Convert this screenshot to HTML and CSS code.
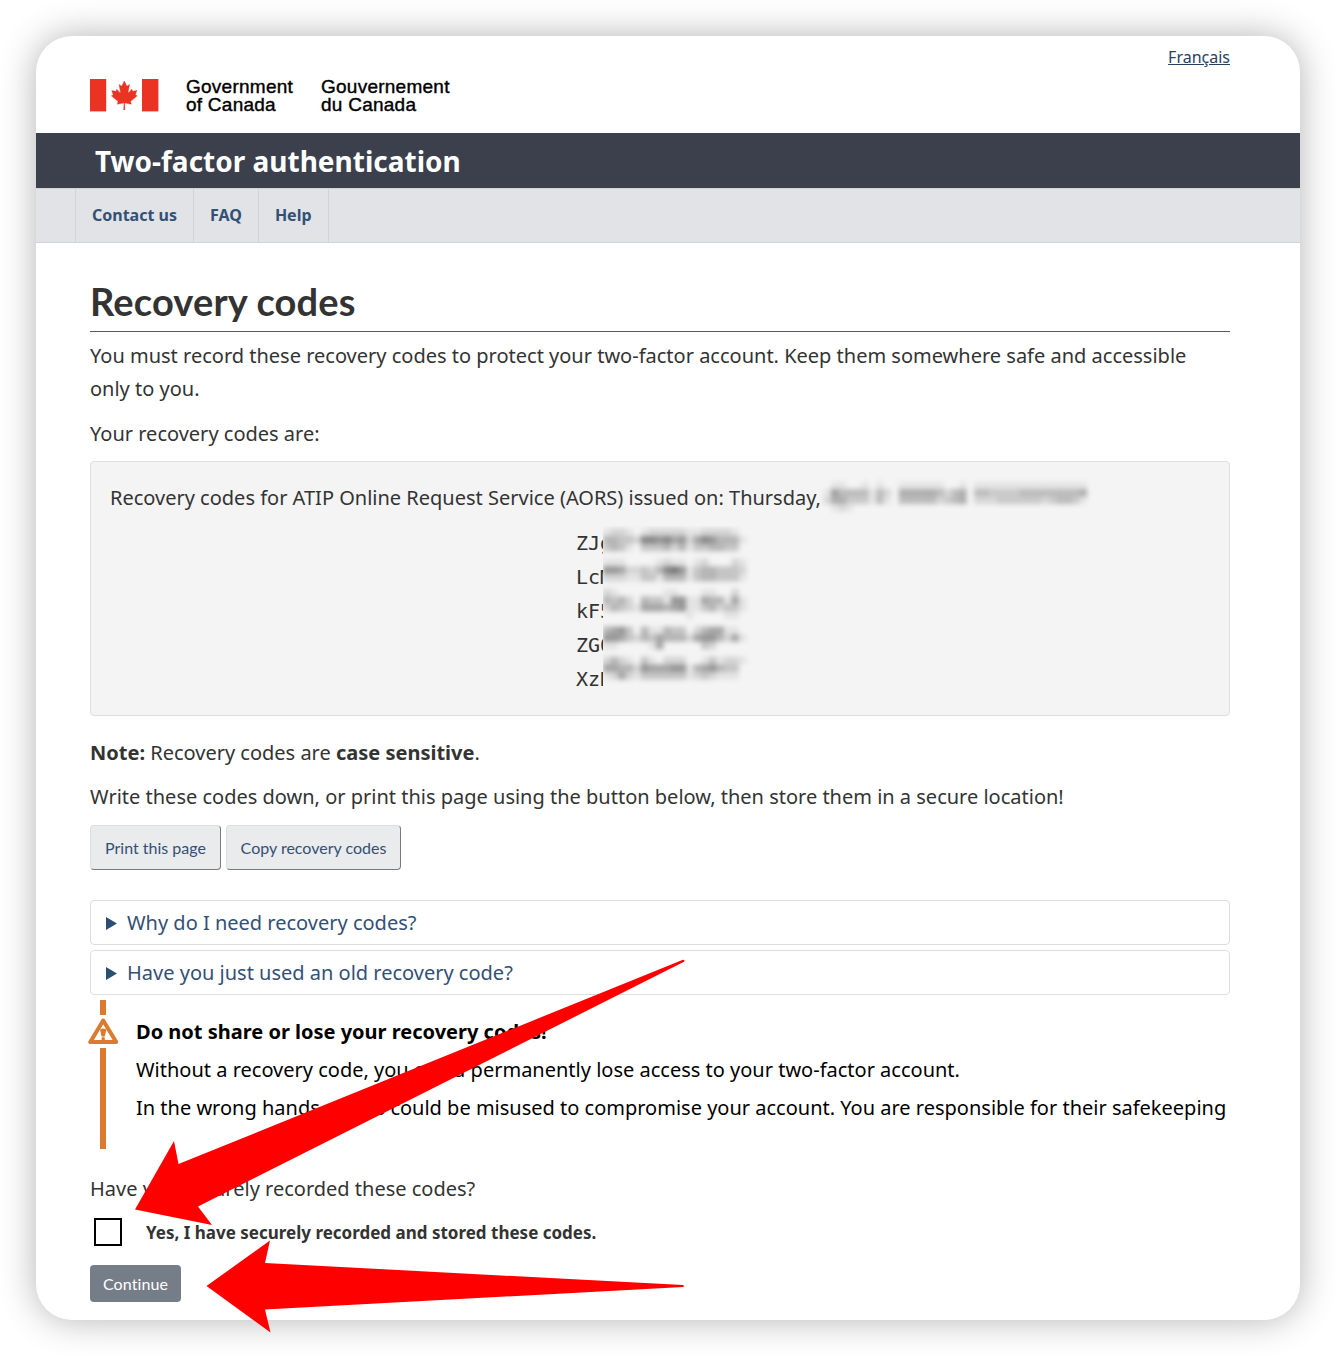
FILE: index.html
```html
<!DOCTYPE html>
<html lang="en">
<head>
<meta charset="utf-8">
<title>Recovery codes</title>
<link rel="stylesheet" href="styles.css">
</head>
<body>
<div class="window">
  <header class="brand">
    <svg class="flag" viewBox="0 0 69 33" width="69" height="33">
      <rect width="16.2" height="32.4" fill="#eb3323"/>
      <rect x="52" width="16.4" height="32.4" fill="#eb3323"/>
      <svg x="20.3" y="2" width="28" height="29" viewBox="-2015 -2000 4030 4030" preserveAspectRatio="none">
        <path fill="#eb3323" stroke="#eb3323" stroke-width="60" d="m-90 2030 45-863a95 95 0 0 0-111-98l-859 151 116-320a65 65 0 0 0-20-73l-941-762 212-99a65 65 0 0 0 34-79l-186-572 542 115a65 65 0 0 0 73-38l105-247 423 454a65 65 0 0 0 111-57l-204-1052 327 189a65 65 0 0 0 91-27l332-652 332 652a65 65 0 0 0 91 27l327-189-204 1052a65 65 0 0 0 111 57l423-454 105 247a65 65 0 0 0 73 38l542-115-186 572a65 65 0 0 0 34 79l212 99-941 762a65 65 0 0 0-20 73l116 320-859-151a95 95 0 0 0-111 98l45 863z"/>
      </svg>
    </svg>
    <div class="wordmark wordmark-en">Government<br>of Canada</div>
    <div class="wordmark">Gouvernement<br>du Canada</div>
    <a class="lang" href="#">Français</a>
  </header>
  <div class="titlebar">Two-factor authentication</div>
  <nav class="menu">
    <a href="#">Contact us</a><a href="#">FAQ</a><a href="#">Help</a>
  </nav>
  <main class="content">
    <h1>Recovery codes</h1>
    <p>You must record these recovery codes to protect your two-factor account. Keep them somewhere safe and accessible only to you.</p>
    <p>Your recovery codes are:</p>
    <section class="well">
      <div class="issued"><span>Recovery codes for ATIP Online Request Service (AORS) issued on: Thursday,</span><svg class="mask" id="date-mask" width="272" height="34"></svg></div>
      <div class="codes">
        <div class="code-list">
          <div>ZJg</div><div>LcM</div><div>kF5</div><div>ZG0</div><div>XzN</div>
        </div>
        <div class="code-cover"><svg class="mask" id="code-mask" width="170" height="170"></svg></div>
      </div>
    </section>
    <p class="note"><strong>Note:</strong> Recovery codes are <strong>case sensitive</strong>.</p>
    <p class="advice">Write these codes down, or print this page using the button below, then store them in a secure location!</p>
    <div class="actions">
      <button class="btn">Print this page</button>
      <button class="btn btn-copy">Copy recovery codes</button>
    </div>
    <div class="faq"><svg width="11" height="14"><path d="M0 1 11 7.500 0 14z" fill="#2b4f73"/></svg>Why do I need recovery codes?</div>
    <div class="faq"><svg width="11" height="14"><path d="M0 1 11 7.500 0 14z" fill="#2b4f73"/></svg>Have you just used an old recovery code?</div>
    <section class="alert">
      <svg class="alert-rail" width="32" height="149" viewBox="0 0 32 149">
        <path d="M12 0h6v15h-6zM12 48h6v101h-6z" fill="#dc7a2f"/>
        <path d="M15.200 20.500 2.300 42h25.900z" fill="none" stroke="#dc7a2f" stroke-width="4" stroke-linejoin="round"/>
        <path d="M12 29.500q3.200-2 6.400 0l-1.600 7h-3.200z" fill="#dc7a2f"/>
        <circle cx="15.2" cy="38.7" r="1.8" fill="#dc7a2f"/>
      </svg>
      <div class="alert-text">
        <h2>Do not share or lose your recovery codes!</h2>
        <div>Without a recovery code, you could permanently lose access to your two-factor account.</div>
        <div>In the wrong hands, codes could be misused to compromise your account. You are responsible for their safekeeping</div>
      </div>
    </section>
    <p class="question">Have you securely recorded these codes?</p>
    <label class="confirm"><span class="box"></span>Yes, I have securely recorded and stored these codes.</label>
    <button class="submit">Continue</button>
  </main>
</div>
<svg class="arrows" width="1336" height="1356" viewBox="0 0 1336 1356">
  <path fill="#f00" d="M135 1209.500 174 1141l4.500 23L683 959.800q2.500.5 1 2L198 1206.500l14 18.500z"/>
  <path fill="#f00" d="M206.500 1286 270 1240.500l-5 22.500L683 1285q2 1 0 2L265 1309.500l5.500 23z"/>
</svg>
<script src="mask.js"></script>
</body>
</html>
```
FILE: styles.css
```css
* { box-sizing: border-box; }
body {
  margin: 0;
  height: 1356px;
  padding: 36px;
  background: #fff;
  font-family: "Noto Sans", sans-serif;
  font-size: 20px;
  line-height: 33px;
  color: #333;
  overflow: hidden;
  position: relative;
}
.window {
  height: 1284px;
  background: #fff;
  border-radius: 36px;
  overflow: hidden;
  box-shadow: 0 0 36px rgba(0, 0, 0, .3);
}
.brand {
  height: 97px;
  padding: 0 70px 0 54px;
  display: flex;
}
.flag { margin-top: 43px; }
.wordmark {
  margin: 42px 0 0 27px;
  font: 19px/18px "Liberation Sans", Arial, sans-serif;
  letter-spacing: .25px;
  color: #000;
  -webkit-text-stroke: .4px #000;
  white-space: nowrap;
}
.wordmark-en { width: 108px; }
.lang {
  margin: 5px 0 0 auto;
  font-size: 16px;
  color: #284162;
}
.titlebar {
  height: 55px;
  padding-left: 59px;
  background: #3b404c;
  color: #fff;
  font-size: 28px;
  font-weight: 700;
  line-height: 57px;
}
.menu {
  height: 55px;
  padding-left: 39px;
  display: flex;
  background: #e1e3e7;
  border-top: 1px solid #d0d3d8;
  border-bottom: 1px solid #d0d3d8;
}
.menu a {
  padding: 0 16px;
  border-right: 1px solid #d0d3d8;
  color: #335075;
  font-size: 16px;
  font-weight: 700;
  line-height: 53px;
  text-decoration: none;
}
.menu a:first-child { border-left: 1px solid #d0d3d8; }
.content { padding: 0 70px 0 54px; }
h1 {
  margin: 35px 0 7px;
  height: 54px;
  border-bottom: 1px solid #5a5a5a;
  font: 700 38px/46px Lato, sans-serif;
  letter-spacing: .17px;
}
p { margin: 0 0 12px; }
.well {
  height: 255px;
  padding: 19px;
  margin-top: -1px;
  border: 1px solid #dcdee1;
  border-radius: 4px;
  background: #f4f4f4;
}
.issued { display: flex; height: 33px; white-space: nowrap; }
.mask { flex: none; filter: blur(2.400px); }
.codes {
  display: flex;
  margin: 12px 0 0 465px;
}
.code-list {
  width: 28px;
  padding-left: 1px;
  overflow: hidden;
  font: 20px/34px "DejaVu Sans Mono", monospace;
}
.code-cover { width: 170px; height: 170px; overflow: hidden; }
.note { margin-top: 20px; }
p.note { margin-bottom: 11px; }
.actions { display: flex; gap: 5px; }
.btn {
  width: 131px;
  height: 45px;
  padding: 0;
  border: 1px solid;
  border-color: #dcdee1 #7b7b7b #7b7b7b #dcdee1;
  border-radius: 4px;
  background: #eaebed;
  color: #335075;
  font: 16px Lato, sans-serif;
}
.btn-copy { width: 175px; }
.faq {
  height: 45px;
  margin-top: 5px;
  padding-left: 15px;
  display: flex;
  align-items: center;
  gap: 10px;
  border: 1px solid #ddd;
  border-radius: 4px;
  color: #335075;
}
.actions + .faq { margin-top: 30px; }
.alert {
  display: flex;
  height: 149px;
  margin: 5px -20px 0 -2px;
  color: #000;
}
.alert-text {
  padding: 13px 0 0 16px;
  line-height: 38px;
  white-space: nowrap;
}
h2 { margin: 0; font-size: 20px; line-height: 38px; }
.question { margin: 23px 0 0; }
.confirm {
  display: flex;
  align-items: center;
  gap: 24px;
  margin: 13px 0 0 4px;
  height: 28px;
  font-size: 17px;
  font-weight: 700;
}
.box { width: 28px; height: 28px; border: 2px solid #000; }
.submit {
  display: block;
  width: 91px;
  height: 37px;
  margin-top: 19px;
  padding: 0;
  border: 0;
  border-radius: 4px;
  background: #757d89;
  color: #fff;
  font: 16px Lato, sans-serif;
  font-variant-ligatures: none;
  letter-spacing: .1px;
}
.arrows { position: absolute; left: 0; top: 0; }
```
FILE: mask.js
```js
// Obscures the private values: each digit is the darkness of one mosaic cell.
function mosaic(id, rows, x0, y0, cell, strength) {
  let out = '<g>';
  rows.forEach((row, r) => [...row].forEach((v, c) => {
    if (v !== '0') {
      out += `<rect x="${x0 + c * cell}" y="${y0 + r * cell}" width="${cell}" height="${cell}" fill-opacity="${v * strength}"/>`;
    }
  }));
  document.getElementById(id).innerHTML = out + '</g>';
}
mosaic('date-mask', [
  '01100101001111110010111111111111111',
  '16444414205555542450443333444444445',
  '25533314104444423450222333333234431',
  '01210000000000000000000000000000000'
], 2.5, 0.5, 7.53, 0.058);
mosaic('code-mask', [
  '1221012222211222210', '4433277675625764441', '3431033342413344330', '0000000000000000000',
  '1110000121101200021', '6652232478613443332', '2221133144413443331', '0000000000000000000',
  '2100000011000110020', '4342043316611544151', '2432155545611342331', '0000000000010000110',
  '0000000000000000000', '4563041143302455110', '6653243544425664251', '1100001500000320000',
  '0000000000000000000', '2421031022200131221', '5544265556614564330', '1252133333312321110'
], 0, 2.500, 7.55, 0.065);
```
